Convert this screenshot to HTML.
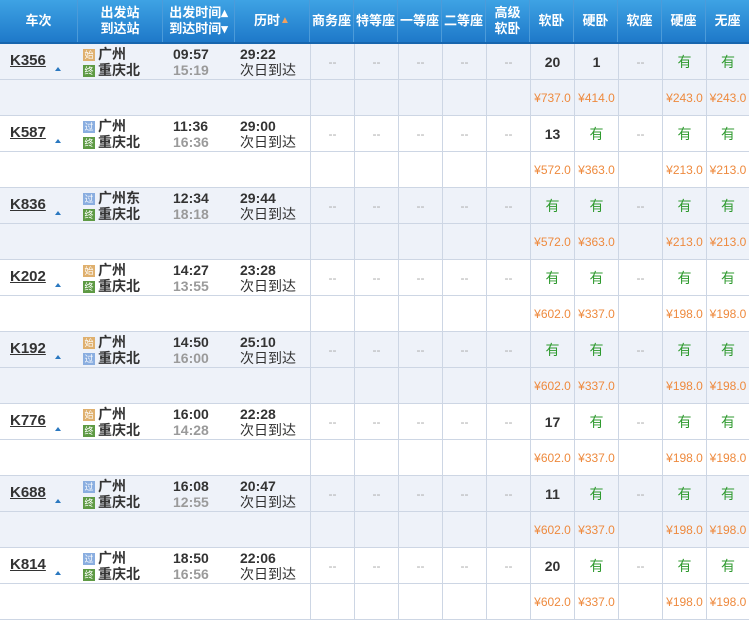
<!DOCTYPE html><html><head><meta charset="utf-8"><style>
*{margin:0;padding:0;box-sizing:border-box}
body{width:749px;height:618px;overflow:hidden;background:#fff;font-family:"Liberation Sans","Noto Sans CJK SC",sans-serif;font-size:13px;color:#333;position:relative}
.hd{position:absolute;left:0;top:0;width:749px;height:44px;background:linear-gradient(#3ea3e4,#1e79c9);border-bottom:2px solid #1766ae}
.hc{position:absolute;top:0;height:42px;color:#fff;font-weight:bold;font-size:13px;display:flex;align-items:center;justify-content:center;text-align:center;line-height:16px;border-right:1px solid #4c9bd9}
.row{position:absolute;left:0;width:749px;height:36px;border-bottom:1px solid #cdd6e4}
.c{position:absolute;top:0;height:35px;display:flex;align-items:center;justify-content:center;border-left:1px solid #cdd6e4;font-size:14px}
.dash{color:#aaa;font-size:12px}
.g{color:#2f9a2f}
.p{color:#ee8a3e;font-size:12px}
.b{font-weight:bold}
.tn{position:absolute;left:10px;top:8px;font-weight:bold;font-size:15px;text-decoration:underline;color:#333}
.tri{position:absolute;left:55px;top:23px;width:0;height:0;border-left:3px solid transparent;border-right:3px solid transparent;border-bottom:4px solid #2a78c0}
.st{position:absolute;left:83px;font-weight:bold;font-size:14px;line-height:16px}
.ic{display:inline-block;width:12px;height:12px;font-size:9px;line-height:12px;text-align:center;color:#fff;margin-right:3px;vertical-align:1px;font-weight:normal}
.s{background:#dfb06e}.o{background:#8aaee0}.e{background:#5e9a44}
.tm{position:absolute;left:173px;font-weight:bold;font-size:14px;line-height:16px}
.du{position:absolute;left:240px;font-size:14px;line-height:16px}
</style></head><body>
<div class="hd">
<div class="hc" style="left:0;width:78px">车次</div>
<div class="hc" style="left:78px;width:85px">出发站<br>到达站</div>
<div class="hc" style="left:163px;width:72px">出发时间▴<br>到达时间▾</div>
<div class="hc" style="left:235px;width:75px">历时<span style="color:#f0a060;font-size:10px">▲</span></div>
<div class="hc" style="left:310px;width:44px">商务座</div>
<div class="hc" style="left:354px;width:44px">特等座</div>
<div class="hc" style="left:398px;width:44px">一等座</div>
<div class="hc" style="left:442px;width:44px">二等座</div>
<div class="hc" style="left:486px;width:44px">高级<br>软卧</div>
<div class="hc" style="left:530px;width:44px">软卧</div>
<div class="hc" style="left:574px;width:44px">硬卧</div>
<div class="hc" style="left:618px;width:44px">软座</div>
<div class="hc" style="left:662px;width:44px">硬座</div>
<div class="hc" style="left:706px;width:43px;border-right:none">无座</div>
</div>
<div id="rows"></div>
<script>
var X=[310,354,398,442,486,530,574,618,662,706,749];
var D=[
["K356","s","广州","e","重庆北","09:57","15:19","29:22",1,["20","1","","有","有"],["737","414","","243","243"]],
["K587","o","广州","e","重庆北","11:36","16:36","29:00",1,["13","有","","有","有"],["572","363","","213","213"]],
["K836","o","广州东","e","重庆北","12:34","18:18","29:44",1,["有","有","","有","有"],["572","363","","213","213"]],
["K202","s","广州","e","重庆北","14:27","13:55","23:28",1,["有","有","","有","有"],["602","337","","198","198"]],
["K192","s","广州","o","重庆北","14:50","16:00","25:10",1,["有","有","","有","有"],["602","337","","198","198"]],
["K776","s","广州","e","重庆北","16:00","14:28","22:28",1,["17","有","","有","有"],["602","337","","198","198"]],
["K688","o","广州","e","重庆北","16:08","12:55","20:47",1,["11","有","","有","有"],["602","337","","198","198"]],
["K814","o","广州","e","重庆北","18:50","16:56","22:06",1,["20","有","","有","有"],["602","337","","198","198"]]];
var L={s:"始",o:"过",e:"终"},h="";
D.forEach(function(d,i){
 var y=44+i*72,bg=i%2==0?"#eef2f9":"#fff";
 var cells="";
 for(var k=0;k<10;k++){var v="<span class='dash'>--</span>";
  if(k>=5){var t=d[9][k-5];if(t){v=t=="有"?"<span class='g'>有</span>":"<span class='b'>"+t+"</span>";}}
  cells+="<div class='c' style='left:"+X[k]+"px;width:"+(X[k+1]-X[k])+"px'>"+v+"</div>";}
 h+="<div class='row' style='top:"+y+"px;background:"+bg+"'>"+
 "<div class='tn'>"+d[0]+"</div><div class='tri'></div>"+
 "<div class='st' style='top:2px'><span class='ic "+d[1]+"'>"+L[d[1]]+"</span>"+d[2]+"</div>"+
 "<div class='st' style='top:18px'><span class='ic "+d[3]+"'>"+L[d[3]]+"</span>"+d[4]+"</div>"+
 "<div class='tm' style='top:2px'>"+d[5]+"</div><div class='tm' style='top:18px;color:#9a9a9a'>"+d[6]+"</div>"+
 "<div class='du b' style='top:2px'>"+d[7]+"</div><div class='du' style='top:18px'>次日到达</div>"+cells+"</div>";
 var pc="";
 for(var k=0;k<10;k++){var v="";if(k>=5){var t=d[10][k-5];if(t)v="<span class='p'>¥"+t+".0</span>";}
  pc+="<div class='c' style='left:"+X[k]+"px;width:"+(X[k+1]-X[k])+"px'>"+v+"</div>";}
 h+="<div class='row' style='top:"+(y+36)+"px;background:"+bg+"'>"+pc+"</div>";
});
document.getElementById("rows").innerHTML=h;
</script>
</body></html>
